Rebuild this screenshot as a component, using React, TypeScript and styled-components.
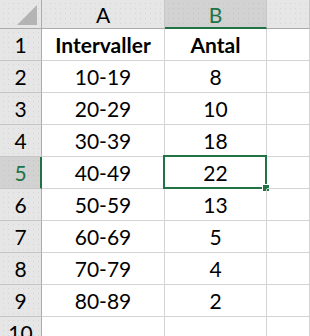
import React from "react";
import styled, { createGlobalStyle, css } from "styled-components";

const Global = createGlobalStyle`
  html, body { margin: 0; padding: 0; background: #ffffff; overflow: hidden; }
  body { font-family: Lato, "Liberation Sans", sans-serif; }
`;

const Sheet = styled.div`
  display: grid;
  grid-template-columns: 42px 123px 102px 1fr;
  grid-template-rows: 29px repeat(10, 32px);
  width: 310px;
  height: 336px;
  overflow: hidden;
  background: #ffffff;
`;

const headerBg = css<{ $active?: boolean }>`
  background-color: ${(p) => (p.$active ? "#d2d2d2" : "#e6e6e6")};
  background-image: radial-gradient(circle, ${(p) => (p.$active ? "#c4c4c4" : "#d4d4d4")} 0.7px, transparent 1px);
  background-size: 5px 5px;
  background-position: 1px 1px;
`;

const Corner = styled.div`
  ${headerBg};
  box-sizing: border-box;
  border-right: 1px solid #ababab;
  border-bottom: 1px solid #ababab;
  position: relative;
`;

const ColHeader = styled.div<{ $active?: boolean }>`
  ${headerBg};
  box-sizing: border-box;
  border-right: 1px solid #c6c6c6;
  border-bottom: ${(p) => (p.$active ? "2px solid #217346" : "1px solid #ababab")};
  display: flex;
  justify-content: center;
  align-items: flex-start;
  padding-top: 1px;
  font-size: 21px;
  line-height: 28px;
  color: ${(p) => (p.$active ? "#217346" : "#000000")};
`;

const RowHeader = styled.div<{ $active?: boolean }>`
  ${headerBg};
  box-sizing: border-box;
  border-bottom: 1px solid #c6c6c6;
  border-right: ${(p) => (p.$active ? "2px solid #217346" : "1px solid #ababab")};
  display: flex;
  justify-content: center;
  align-items: flex-start;
  padding-left: ${(p) => (p.$active ? "1px" : "0")};
  font-size: 21px;
  line-height: 31px;
  color: ${(p) => (p.$active ? "#217346" : "#000000")};
`;

const Cell = styled.div<{ $bold?: boolean }>`
  box-sizing: border-box;
  position: relative;
  border-right: 1px solid #d4d4d4;
  border-bottom: 1px solid #d4d4d4;
  display: flex;
  justify-content: center;
  align-items: flex-start;
  font-size: 21px;
  line-height: 31px;
  font-weight: ${(p) => (p.$bold ? 700 : 400)};
  color: #000000;
`;

const Selection = styled.div`
  position: absolute;
  top: -2px;
  left: -2px;
  right: -1px;
  bottom: -1px;
  border: 2px solid #217346;
  box-sizing: border-box;
  pointer-events: none;
`;

const FillHandle = styled.div`
  position: absolute;
  right: -4px;
  bottom: -4px;
  width: 6px;
  height: 6px;
  background: #217346;
  box-shadow: 0 0 0 1px #ffffff;
`;

const CornerTriangle = styled.svg`
  position: absolute;
  left: 0;
  top: 0;
`;

const data: [string, string][] = [
  ["10-19", "8"],
  ["20-29", "10"],
  ["30-39", "18"],
  ["40-49", "22"],
  ["50-59", "13"],
  ["60-69", "5"],
  ["70-79", "4"],
  ["80-89", "2"],
];

export default function App() {
  return (
    <>
      <Global />
      <Sheet>
        <Corner>
          <CornerTriangle width="41" height="28" viewBox="0 0 41 28">
            <polygon points="37,5 37,25 17,25" fill="#b4b4b4" />
          </CornerTriangle>
        </Corner>
        <ColHeader>A</ColHeader>
        <ColHeader $active>B</ColHeader>
        <ColHeader />

        <RowHeader>1</RowHeader>
        <Cell $bold>Intervaller</Cell>
        <Cell $bold>Antal</Cell>
        <Cell />

        {data.map(([a, b], i) => {
          const row = i + 2;
          const active = row === 5;
          return (
            <React.Fragment key={row}>
              <RowHeader $active={active}>{row}</RowHeader>
              <Cell>{a}</Cell>
              <Cell>
                {b}
                {active && (
                  <Selection>
                    <FillHandle />
                  </Selection>
                )}
              </Cell>
              <Cell />
            </React.Fragment>
          );
        })}

        <RowHeader>10</RowHeader>
        <Cell />
        <Cell />
        <Cell />
      </Sheet>
    </>
  );
}
